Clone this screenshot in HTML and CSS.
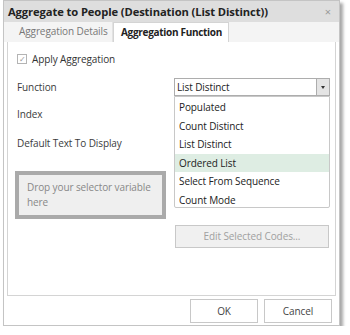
FILE: index.html
```html
<!DOCTYPE html>
<html lang="en">
<head>
    <meta charset="UTF-8">
    <title>Aggregate to People</title>
    <link rel="stylesheet" href="styles.css">
</head>
<body>
    <div class="dialog">
        <div class="title-bar">
            <span class="title">Aggregate to People (Destination (List Distinct))</span>
            <span class="close">&#215;</span>
        </div>
        <div class="tabs">
            <div class="tab">Aggregation Details</div>
            <div class="tab active">Aggregation Function</div>
        </div>
        <div class="panel">
            <label class="check-row">
                <span class="check">&#10003;</span>
                Apply Aggregation
            </label>
            <div class="row row-function">
                <span class="label">Function</span>
                <div class="select">
                    <span class="select-value">List Distinct</span>
                    <span class="select-btn"><i class="arrow"></i></span>
                    <ul class="options">
                        <li>Populated</li>
                        <li>Count Distinct</li>
                        <li>List Distinct</li>
                        <li class="hover">Ordered List</li>
                        <li>Select From Sequence</li>
                        <li>Count Mode</li>
                    </ul>
                </div>
            </div>
            <div class="row row-index">
                <span class="label">Index</span>
            </div>
            <div class="row row-default">
                <span class="label">Default Text To Display</span>
            </div>
            <div class="drop-box">Drop your selector variable here</div>
            <div class="edit-btn">Edit Selected Codes...</div>
        </div>
        <div class="footer">
            <div class="btn">OK</div>
            <div class="btn">Cancel</div>
        </div>
    </div>
</body>
</html>
```

FILE: styles.css
```css
* {
    margin: 0;
    padding: 0;
    box-sizing: border-box;
    list-style: none;
}
body {
    background: #fff;
    font-family: "Open Sans", "Noto Sans", sans-serif;
    font-size: 10px;
    letter-spacing: -0.1px;
    color: #3c3c3c;
    white-space: nowrap;
}
.dialog {
    margin-left: 3px;
    width: 337px;
    height: 326px;
    border: 1px solid #c4c4c4;
    background: #fff;
    box-shadow: 3px 3px 3px rgba(0,0,0,0.35);
}
.title-bar {
    height: 21px;
    background: #dedede;
    display: flex;
    align-items: center;
    justify-content: space-between;
    padding: 0 8px 0 4px;
}
.title {
    font-weight: bold;
    font-size: 11.2px;
    color: #222;
}
.close {
    color: #999;
    font-size: 11px;
}
.tabs {
    height: 20px;
    background: #f4f4f4;
    display: flex;
    align-items: flex-end;
    padding-left: 6px;
}
.tab {
    height: 20px;
    line-height: 19px;
    padding: 0 9px;
    width: 103px;
    color: #777;
    border-right: 1px solid #e2e2e2;
}
.tab.active {
    width: 116px;
    background: #fff;
    color: #222;
    font-weight: bold;
    letter-spacing: -0.3px;
    border: 1px solid #d4d4d4;
    border-bottom: none;
    padding: 0 7px;
}
.panel {
    margin: 0 3px 0 3px;
    height: 254px;
    border: 1px solid #d4d4d4;
    border-top: none;
    padding: 0 0 0 9px;
}
.check-row {
    display: flex;
    align-items: center;
    padding-top: 7px;
    height: 27px;
    gap: 5px;
    color: #333;
}
.check {
    width: 10px;
    height: 10px;
    border: 1px solid #b4b4b4;
    font-size: 8px;
    line-height: 8px;
    text-align: center;
    color: #999;
}
.row {
    display: flex;
    align-items: center;
    height: 18px;
}
.row-function {
    margin-top: 9px;
}
.row-index {
    margin-top: 9px;
}
.row-default {
    margin-top: 11px;
}
.label {
    width: 157px;
}
.select {
    position: relative;
    width: 156px;
    height: 18px;
    border: 1px solid #adadad;
    display: flex;
    align-items: center;
    justify-content: space-between;
    padding-left: 2px;
    color: #222;
}
.select-btn {
    width: 13px;
    height: 16px;
    background: #e4e4e4;
    border-left: 1px solid #adadad;
    display: flex;
    align-items: center;
    justify-content: center;
}
.arrow {
    width: 0;
    height: 0;
    border-left: 2.5px solid transparent;
    border-right: 2.5px solid transparent;
    border-top: 3px solid #333;
}
.options {
    position: absolute;
    top: 17px;
    left: -1px;
    width: 156px;
    height: 112px;
    background: #fff;
    border: 1px solid #c8c8c8;
    border-radius: 0 0 2px 2px;
    padding-top: 1px;
    z-index: 2;
}
.options li {
    height: 18.5px;
    line-height: 18px;
    padding-left: 4px;
    color: #222;
}
.options li.hover {
    background: #deede3;
}
.drop-box {
    margin: 19px 0 0 -2px;
    width: 151px;
    height: 48px;
    border: 4px solid #aaa;
    background: #efefef;
    padding: 5px 8px;
    color: #888;
    line-height: 15px;
    white-space: normal;
}
.edit-btn {
    margin: 6px 0 0 158px;
    width: 154px;
    height: 23px;
    border: 1px solid #c8c8c8;
    background: #f0f0f0;
    color: #a0a0a0;
    text-align: center;
    line-height: 21px;
}
.footer {
    display: flex;
    justify-content: flex-end;
    gap: 6px;
    padding: 3px 7px 0 0;
}
.btn {
    width: 68px;
    height: 24px;
    border: 1px solid #c8c8c8;
    background: #fff;
    text-align: center;
    line-height: 22px;
    color: #444;
}
```
